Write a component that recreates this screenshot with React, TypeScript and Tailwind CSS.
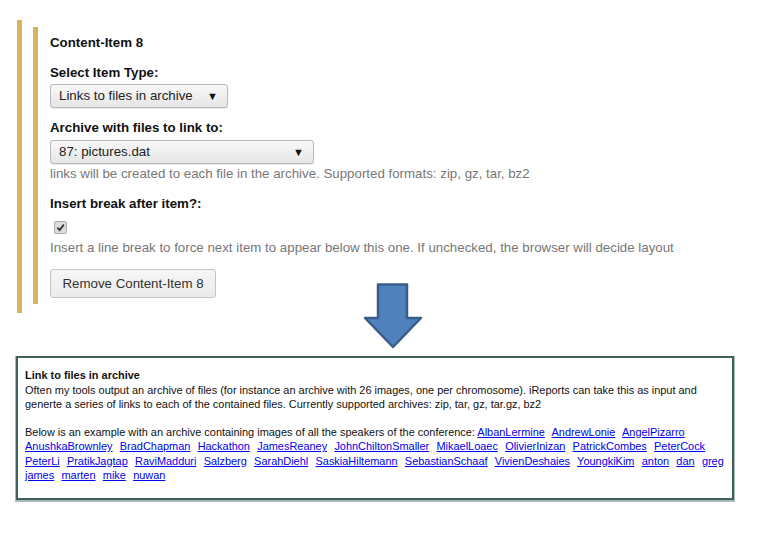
import React from "react";

const links1 = ["AlbanLermine", "AndrewLonie", "AngelPizarro"];
const links2 = ["AnushkaBrownley", "BradChapman", "Hackathon", "JamesReaney", "JohnChiltonSmaller", "MikaelLoaec", "OlivierInizan", "PatrickCombes", "PeterCock"];
const links3 = ["PeterLi", "PratikJagtap", "RaviMadduri", "Salzberg", "SarahDiehl", "SaskiaHiltemann", "SebastianSchaaf", "VivienDeshaies", "YoungkiKim", "anton", "dan", "greg"];
const links4 = ["james", "marten", "mike", "nuwan"];

function Links({ items }: { items: string[] }) {
  return (
    <>
      {items.map((n, i) => (
        <React.Fragment key={n}>
          <a href="#" className="text-[#0000ee] underline mr-[1.2px]">{n}</a>
          {i < items.length - 1 ? "\u00a0 " : ""}
        </React.Fragment>
      ))}
    </>
  );
}

function Select({ label, width }: { label: string; width: string }) {
  return (
    <div
      className={`${width} h-[24px] flex items-center justify-between pl-[8px] pr-[9px] border border-[#b8b8b8] rounded-[3px] bg-gradient-to-b from-[#f8f8f8] to-[#e6e6e6] text-[13.3px] text-[#222] shadow-[0_1px_1px_rgba(0,0,0,0.08)]`}
    >
      <span>{label}</span>
      <span className="text-[11px] text-[#111]">▼</span>
    </div>
  );
}

export default function App() {
  return (
    <div className="relative w-[770px] h-[537px] bg-white overflow-hidden" style={{ fontFamily: '"Liberation Sans", Arial, sans-serif' }}>
      <div className="ml-[17px] mt-[20px] w-[680px] border-l-[5px] border-[#dbb25f] pl-[11px] pt-[7px] pb-[9px]">
        <div className="border-l-[5px] border-[#dbb25f] pl-[12px] pt-[8px] pb-[6px] flex flex-col">
          <div className="text-[13.3px] font-bold text-[#111] leading-[16px]">Content-Item 8</div>
          <div className="mt-[14px] text-[13.3px] font-bold text-[#111] leading-[16px]">Select Item Type:</div>
          <div className="mt-[3px]">
            <Select label="Links to files in archive" width="w-[178px]" />
          </div>
          <div className="mt-[12px] text-[13.3px] font-bold text-[#111] leading-[16px]">Archive with files to link to:</div>
          <div className="mt-[4px]">
            <Select label="87: pictures.dat" width="w-[264px]" />
          </div>
          <div className="mt-[2px] text-[13.3px] text-[#777] leading-[16px] whitespace-nowrap">
            links will be created to each file in the archive. Supported formats: zip, gz, tar, bz2
          </div>
          <div className="mt-[14px] text-[13.3px] font-bold text-[#111] leading-[16px]">Insert break after item?:</div>
          <div className="mt-[9px] ml-[4px] w-[13px] h-[13px] rounded-[2px] border border-[#aaa] bg-[#dcdcdc] flex items-center justify-center">
            <svg width="9" height="9" viewBox="0 0 10 10">
              <path d="M1.5 5.2 L4 7.8 L8.7 1.8" fill="none" stroke="#333" strokeWidth="2" />
            </svg>
          </div>
          <div className="mt-[6px] text-[13.3px] text-[#777] leading-[16px] whitespace-nowrap">
            Insert a line break to force next item to appear below this one. If unchecked, the browser will decide layout
          </div>
          <div className="mt-[13px]">
            <button className="w-[166px] h-[29px] border border-[#c4c4c4] rounded-[3px] bg-gradient-to-b from-[#f6f6f6] to-[#ebebeb] text-[13.3px] text-[#333]">
              Remove Content-Item 8
            </button>
          </div>
        </div>
      </div>

      <svg className="absolute left-[362px] top-[283px]" width="62" height="66" viewBox="0 0 62 66">
        <path d="M16 1.5 H45 V35 H59 L31 64 L3 35 H16 Z" fill="#4f81bd" stroke="#385d8a" strokeWidth="2.5" strokeLinejoin="round" />
      </svg>

      <div className="ml-[16px] mt-[43px] w-[718px] border-2 border-[#3f605b] shadow-[0_1px_0_1px_#a9bab7] pl-[7px] pt-[10px] pb-[15px] text-[10.95px] leading-[14.5px] text-[#111]">
        <div className="font-bold">Link to files in archive</div>
        <div>
          Often my tools output an archive of files (for instance an archive with 26 images, one per chromosome). iReports can take this as input and
          <br />
          generte a series of links to each of the contained files. Currently supported archives: zip, tar, gz, tar.gz, bz2
        </div>
        <div className="h-[13px]" />
        <div>
          Below is an example with an archive containing images of all the speakers of the conference: <Links items={links1} />
          <br />
          <Links items={links2} />
          <br />
          <Links items={links3} />
          <br />
          <Links items={links4} />
        </div>
      </div>
    </div>
  );
}
